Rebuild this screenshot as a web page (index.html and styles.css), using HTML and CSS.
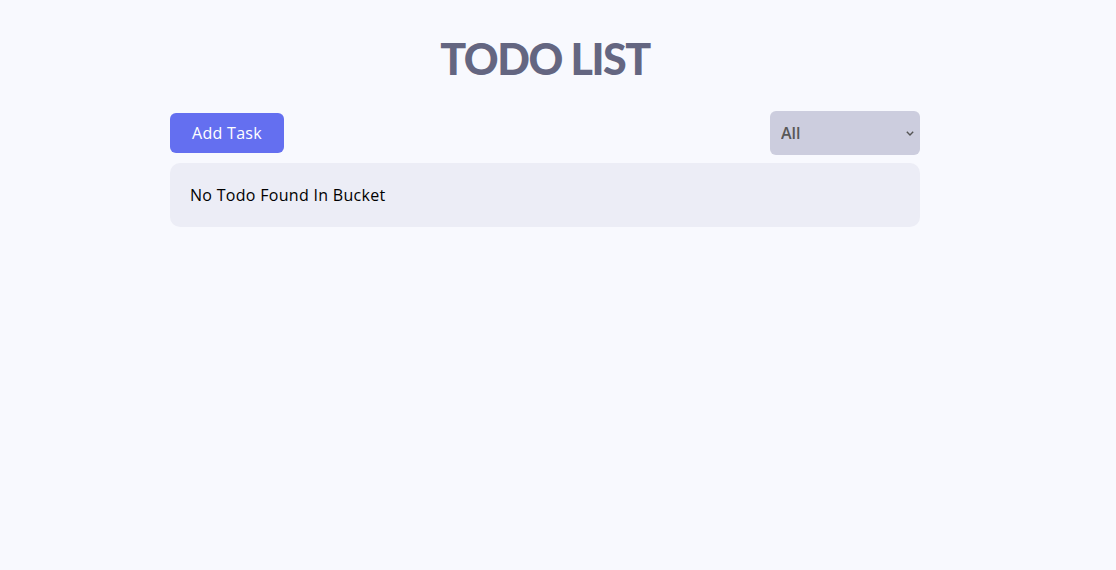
FILE: index.html
```html
<!DOCTYPE html>
<html lang="en">
<head>
<meta charset="utf-8">
<title>Todo List</title>
<link rel="stylesheet" href="styles.css">
</head>
<body>
<div class="app">
  <h1 class="title">TODO LIST</h1>
  <div class="toolbar">
    <button class="btn">Add Task</button>
    <select class="filter">
      <option>All</option>
      <option>Incomplete</option>
      <option>Completed</option>
    </select>
  </div>
  <div class="bucket">
    <p class="empty">No Todo Found In Bucket</p>
  </div>
</div>
</body>
</html>
```
FILE: styles.css
```css
* { box-sizing: border-box; }
html, body { height: 100%; }
body {
  margin: 0;
  padding-right: 26px;
  background: #f8f9fe;
  font-family: "Open Sans", "Noto Sans", sans-serif;
}
.app {
  width: 750px;
  margin: 0 auto;
  padding-top: 31px;
}
.title {
  margin: 0 0 24px;
  text-align: center;
  font-family: "Lato", "Open Sans", sans-serif;
  font-size: 43px;
  line-height: 56px;
  font-weight: 900;
  letter-spacing: -1.5px;
  color: #646681;
}
.toolbar {
  display: flex;
  justify-content: space-between;
  align-items: center;
  height: 44px;
}
.btn {
  width: 114px;
  height: 40px;
  border: none;
  border-radius: 6px;
  background: #646ff0;
  color: #fff;
  font-family: inherit;
  font-size: 16px;
  font-weight: 500;
  letter-spacing: 0.3px;
  cursor: pointer;
}
.filter {
  appearance: none;
  -webkit-appearance: none;
  width: 150px;
  height: 44px;
  border: none;
  border-radius: 6px;
  background-color: #cccdde;
  background-image: url("data:image/svg+xml;utf8,<svg xmlns='http://www.w3.org/2000/svg' width='8' height='5' viewBox='0 0 8 5'><path d='M0.8 0.8 L4 4 L7.2 0.8' fill='none' stroke='%23555' stroke-width='1.4'/></svg>");
  background-repeat: no-repeat;
  background-position: right 6px center;
  color: #585858;
  font-family: inherit;
  font-size: 16px;
  font-weight: 600;
  padding: 0 6px 0 11px;
}
.bucket {
  margin-top: 8px;
  background: #ecedf6;
  border-radius: 10px;
  padding: 20px;
}
.empty {
  margin: 0;
  font-size: 16px;
  line-height: 24px;
  letter-spacing: 0.3px;
  color: #000;
}
```
